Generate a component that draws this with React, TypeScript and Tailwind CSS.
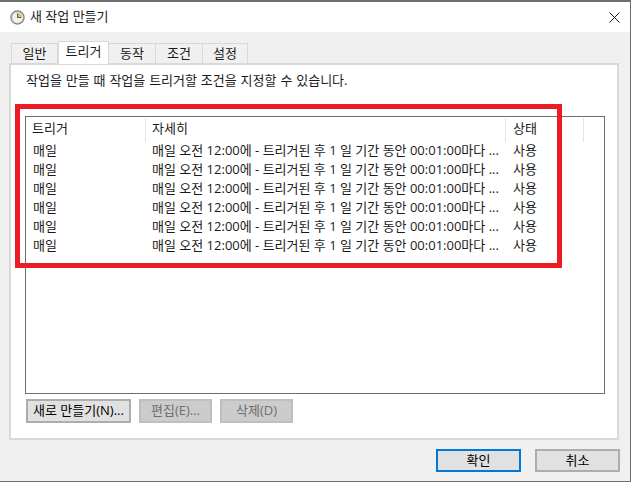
const font = { fontFamily: '"Open Sans", "Noto Sans CJK KR", sans-serif' };

const tabs = ['일반', '트리거', '동작', '조건', '설정'];
const tabWidths = ['w-[47px]', 'w-[51px]', 'w-[48px]', 'w-[48px]', 'w-[46px]'];
const rows = [0, 1, 2, 3, 4, 5];

function ClockIcon() {
  return (
    <svg width="15" height="15" viewBox="0 0 15 15">
      <circle cx="7.5" cy="7.5" r="6.6" fill="#d9d9d2" stroke="#77807f" strokeWidth="1.2" />
      <circle cx="7.5" cy="7.5" r="4.8" fill="#f6f3e6" />
      <path d="M7.5 3 A4.5 4.5 0 0 1 12 7.5 L7.5 7.5 Z" fill="#e2bd6c" />
      <path d="M7.5 3.5 V7.5 H11" fill="none" stroke="#555" strokeWidth="1" />
    </svg>
  );
}

function Button({ label, disabled, className }: { label: string; disabled?: boolean; className: string }) {
  return (
    <div
      className={`flex items-center justify-center border-2 text-[13px] ${
        disabled ? 'border-[#bfbfbf] bg-[#cccccc] text-[#6d6d6d]' : 'border-[#adadad] bg-[#e1e1e1] text-black'
      } ${className}`}
    >
      {label}
    </div>
  );
}

export default function App() {
  return (
    <div
      className="relative flex h-[482px] w-[631px] flex-col overflow-hidden border-t-2 border-r border-b border-[#6f6f6f] bg-[#f0f0f0] text-[13px] text-[#1a1a1a]"
      style={font}
    >
      <div className="flex h-[30px] items-center justify-between bg-white pl-[10px] pr-[9px]">
        <div className="flex items-center gap-[5px]">
          <ClockIcon />
          <span>새 작업 만들기</span>
        </div>
        <svg width="11" height="11" viewBox="0 0 11 11" className="mr-[1px]">
          <path d="M0.5 0.5 L10.5 10.5 M10.5 0.5 L0.5 10.5" stroke="#1a1a1a" strokeWidth="1" fill="none" />
        </svg>
      </div>

      <div className="ml-[11px] mt-[10px] flex h-[21px] items-end">
        {tabs.map((tab, i) =>
          i === 1 ? (
            <div
              key={tab}
              className="z-10 -mb-px flex h-[23px] w-[51px] items-center justify-center border border-b-0 border-[#d9d9d9] bg-white pb-[3px]"
            >
              {tab}
            </div>
          ) : (
            <div
              key={tab}
              className={`flex h-[20px] items-center justify-center border border-b-0 border-[#d9d9d9] bg-[#f0f0f0] ${tabWidths[i]} ${i > 1 ? '-ml-px' : ''}`}
            >
              {tab}
            </div>
          ),
        )}
      </div>

      <div className="ml-[9px] flex h-[377px] w-[610px] flex-col border-2 border-[#d9d9d9] bg-white pl-[14px]">
        <p className="mt-[6px] h-[18px] pl-[1px] leading-[18px] [word-spacing:0.5px]">작업을 만들 때 작업을 트리거할 조건을 지정할 수 있습니다.</p>

        <div className="mt-[27px] h-[278px] w-[580px] border border-[#6f6f6f] pt-[1px]">
          <div className="flex h-[24px] items-center">
            <div className="h-full w-[120px] border-r border-[#e5e5e5] pl-[6px] leading-[20px]">트리거</div>
            <div className="h-full w-[360px] border-r border-[#e5e5e5] pl-[6px] leading-[20px]">자세히</div>
            <div className="h-full w-[78px] border-r border-[#e5e5e5] pl-[7px] leading-[20px]">상태</div>
          </div>
          {rows.map((row) => (
            <div key={row} className="flex h-[19px] items-center pb-[2px]">
              <div className="w-[120px] pl-[7px]">매일</div>
              <div className="w-[361px] whitespace-nowrap pl-[6px]">매일 오전 12:00에 - 트리거된 후 1 일 기간 동안 00:01:00마다 ...</div>
              <div className="pl-[6px]">사용</div>
            </div>
          ))}
        </div>

        <div className="mt-[5px] flex gap-[8px] pl-[1px]">
          <Button label="새로 만들기(N)..." className="h-[24px] w-[105px]" />
          <Button label="편집(E)..." disabled className="h-[24px] w-[73px]" />
          <Button label="삭제(D)" disabled className="h-[24px] w-[73px]" />
        </div>
      </div>

      <div className="mt-[9px] flex justify-end gap-[14px] pr-[10px]">
        <Button label="확인" className="h-[23px] w-[85px] !border-[#0078d7] bg-[#e1e1e1]" />
        <Button label="취소" className="h-[23px] w-[85px]" />
      </div>

      {/* red annotation drawn over the screenshot */}
      <div className="absolute left-[15px] top-[102px] h-[164px] w-[547px] border-[5px] border-[#ed1c24]" />
    </div>
  );
}
